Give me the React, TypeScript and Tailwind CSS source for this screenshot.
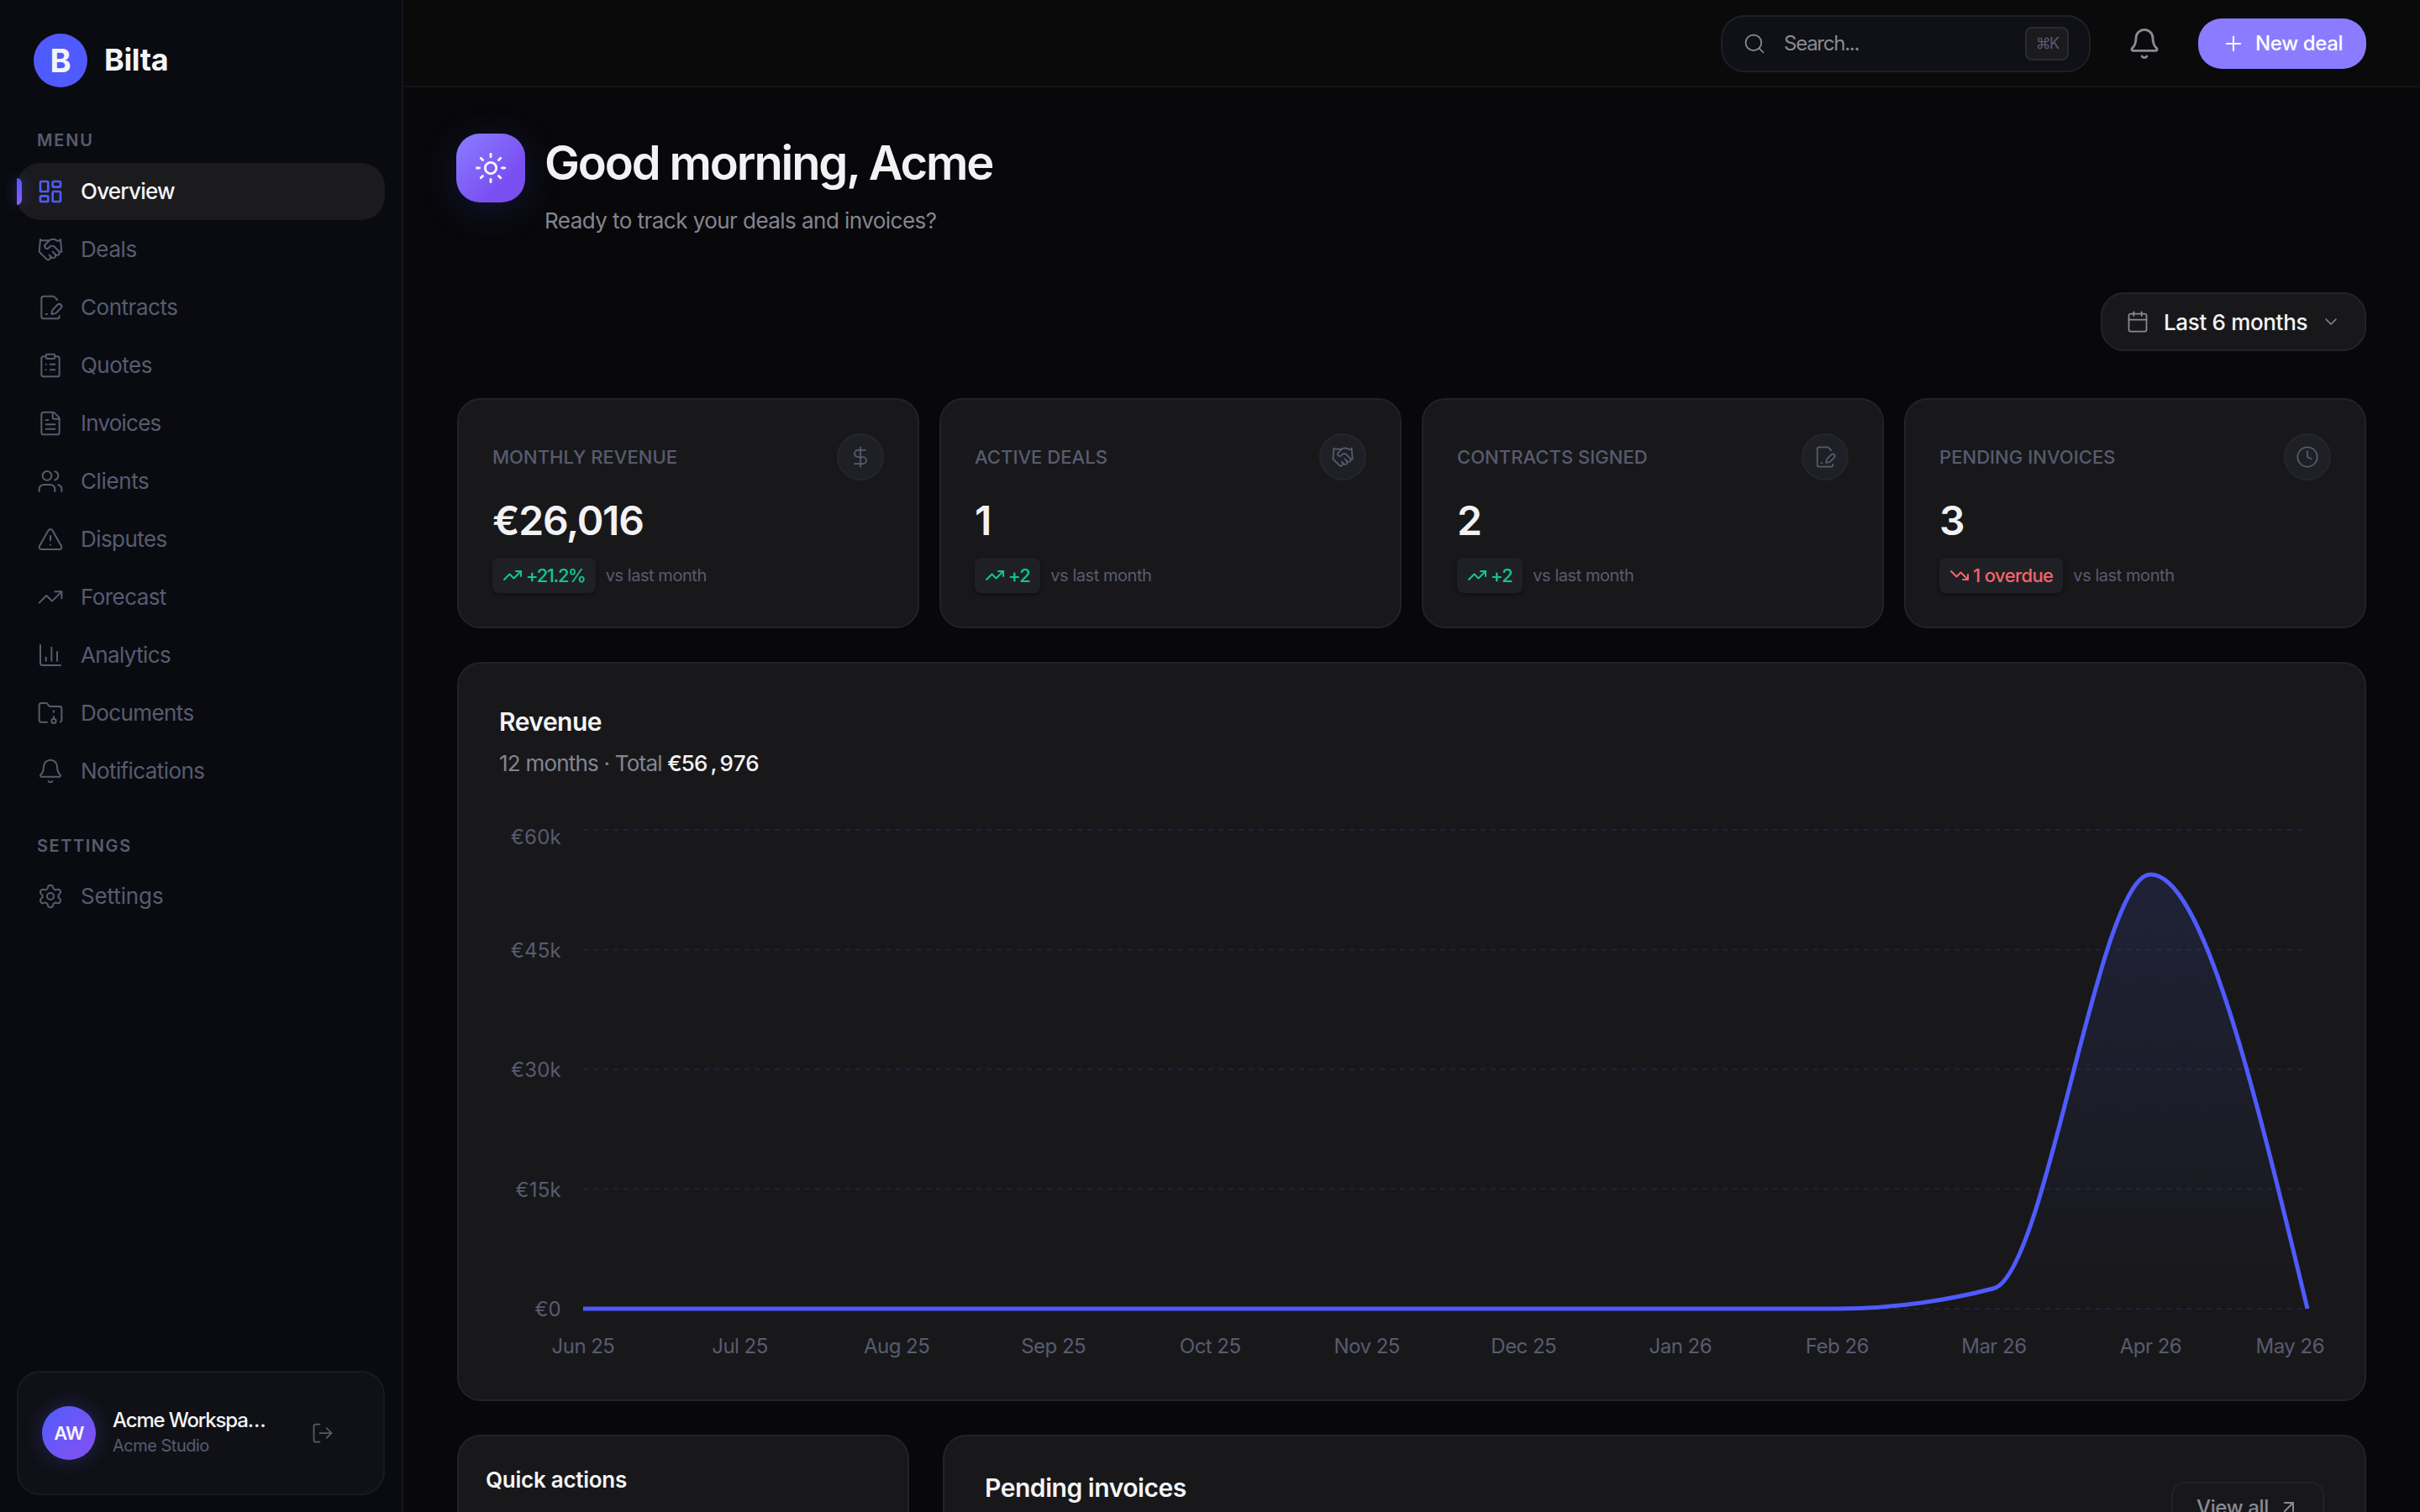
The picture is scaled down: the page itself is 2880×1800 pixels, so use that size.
import { clsx } from 'clsx';
import {
  ArrowUpRight,
  Bell,
  Calendar,
  ChartColumn,
  ChevronDown,
  ClipboardList,
  Clock,
  DollarSign,
  FileSignature,
  FileText,
  FolderArchive,
  Handshake,
  LayoutDashboard,
  LogOut,
  Plus,
  Search,
  Settings,
  Sun,
  TrendingDown,
  TrendingUp,
  TriangleAlert,
  Users,
  type LucideIcon,
} from 'lucide-react';

type NavEntry = { label: string; icon: LucideIcon; tracking: string; active?: boolean };

const MENU: NavEntry[] = [
  { label: 'Overview', icon: LayoutDashboard, tracking: 'tracking-[-0.03em]', active: true },
  { label: 'Deals', icon: Handshake, tracking: 'tracking-[-0.015em]' },
  { label: 'Contracts', icon: FileSignature, tracking: 'tracking-[-0.018em]' },
  { label: 'Quotes', icon: ClipboardList, tracking: 'tracking-[-0.02em]' },
  { label: 'Invoices', icon: FileText, tracking: 'tracking-[-0.03em]' },
  { label: 'Clients', icon: Users, tracking: 'tracking-[-0.015em]' },
  { label: 'Disputes', icon: TriangleAlert, tracking: 'tracking-[-0.022em]' },
  { label: 'Forecast', icon: TrendingUp, tracking: 'tracking-[-0.022em]' },
  { label: 'Analytics', icon: ChartColumn, tracking: 'tracking-[-0.024em]' },
  { label: 'Documents', icon: FolderArchive, tracking: 'tracking-[-0.022em]' },
  { label: 'Notifications', icon: Bell, tracking: 'tracking-[-0.023em]' },
];

const STATS = [
  { label: 'MONTHLY REVENUE', value: '€26,016', delta: '+21.2%', up: true, icon: DollarSign, tracking: 'tracking-[-0.062em]' },
  { label: 'ACTIVE DEALS', value: '1', delta: '+2', up: true, icon: Handshake, tracking: 'tracking-[-0.03em]' },
  { label: 'CONTRACTS SIGNED', value: '2', delta: '+2', up: true, icon: FileSignature, tracking: 'tracking-[-0.03em]' },
  { label: 'PENDING INVOICES', value: '3', delta: '1 overdue', up: false, icon: Clock, tracking: 'tracking-[-0.028em]' },
];

const REVENUE = [
  { month: 'Jun 25', total: 0 },
  { month: 'Jul 25', total: 0 },
  { month: 'Aug 25', total: 0 },
  { month: 'Sep 25', total: 0 },
  { month: 'Oct 25', total: 0 },
  { month: 'Nov 25', total: 0 },
  { month: 'Dec 25', total: 0 },
  { month: 'Jan 26', total: 0 },
  { month: 'Feb 26', total: 0 },
  { month: 'Mar 26', total: 2556 },
  { month: 'Apr 26', total: 54420 },
  { month: 'May 26', total: 0 },
];

const TICKS = [60, 45, 30, 15, 0];

function NavItem({ label, icon: Icon, tracking, active }: NavEntry) {
  return (
    <a
      className={clsx(
        'relative flex h-[68px] items-center gap-5 rounded-[28px] pl-6 text-[26px]',
        tracking,
        active ? 'bg-[#1b1b1e] font-medium text-[#f4f4f6]' : 'text-[#585b70]',
      )}
    >
      {active && (
        <span className="absolute left-0 top-[18px] h-8 w-1.5 rounded-r-full bg-linear-to-b from-[#4f5bff] to-[#8b5cf6] shadow-[0_0_16px_rgba(79,91,255,0.45)]" />
      )}
      <Icon size={32} strokeWidth={active ? 2 : 1.5} className={active ? 'text-[#4f5bff]' : ''} />
      <span className="pb-0.5">{label}</span>
    </a>
  );
}

function Sidebar() {
  return (
    <aside className="flex w-[480px] shrink-0 flex-col border-r-2 border-[#16171b] bg-[#0a0b10] pb-5 pl-5 pr-5">
      <div className="mt-10 flex items-center gap-5 pl-5">
        <div className="flex size-16 items-center justify-center rounded-full bg-[#4f5bff] text-[38px] font-bold text-[#f4f4f6]">B</div>
        <span className="pb-0.5 text-[36px] font-bold tracking-[-0.01em] text-[#f4f4f6]">Bilta</span>
      </div>
      <h2 className="mt-12 pl-6 text-[20px] font-semibold leading-[30px] tracking-[0.09em] text-[#585b70]">MENU</h2>
      <nav className="mt-3 flex flex-col gap-px">
        {MENU.map((item) => <NavItem key={item.label} {...item} />)}
      </nav>
      <h2 className="mt-10 pl-6 text-[20px] font-semibold leading-[30px] tracking-[0.078em] text-[#585b70]">SETTINGS</h2>
      <nav className="mt-[11px]">
        <NavItem label="Settings" icon={Settings} tracking="tracking-[-0.005em]" />
      </nav>

      <div className="mt-auto flex h-[148px] items-center rounded-[28px] border-2 border-[#1a1b1f] bg-[#101116] pl-7">
        <div className="flex size-16 items-center justify-center rounded-full bg-linear-to-br from-[#4f5bff] to-[#8450f0] text-[22px] font-semibold tracking-[-0.03em] text-[#f4f4f6] shadow-[0_0_24px_rgba(79,91,255,0.28)]">
          AW
        </div>
        <div className="ml-5 w-[190px]">
          <p className="-mt-0.5 text-[24px] font-medium leading-8 tracking-[-0.048em] whitespace-nowrap text-[#f4f4f6]">Acme Workspa…</p>
          <p className="text-[20px] leading-7 tracking-[-0.025em] text-[#585b70]">Acme Studio</p>
        </div>
        <LogOut size={28} strokeWidth={1.5} className="ml-[46px] text-[#585b70]" />
      </div>
    </aside>
  );
}

function Topbar() {
  return (
    <header className="flex h-[104px] shrink-0 items-center justify-end border-b-2 border-[#151518] bg-[#0a0a0b] pr-16 pt-0.5">
      <div className="flex h-[68px] w-[440px] items-center rounded-[28px] border-2 border-[#1f2026] bg-[#101116] pl-6 pr-6">
        <Search size={28} strokeWidth={1.5} className="text-[#8a8a94]" />
        <span className="ml-[21px] text-[24px] tracking-[-0.052em] text-[#8a8a94]">Search...</span>
        <kbd className="ml-auto flex h-10 w-[52px] items-center justify-center rounded-lg border-2 border-[#2a2b31] bg-[#1b1b1e] pb-0.5 font-['Inter',sans-serif] text-[18px] tracking-[-0.1em] text-[#585b70]">
          ⌘K
        </kbd>
      </div>
      <Bell size={40} strokeWidth={1.75} className="ml-11 text-[#8a8a94]" />
      <button className="ml-11 flex h-[60px] w-[200px] items-center rounded-[28px] bg-[#8b7cff] pl-7 text-[24px] font-medium text-white">
        <Plus size={28} strokeWidth={1.75} />
        <span className="ml-3 tracking-[-0.015em]">New deal</span>
      </button>
    </header>
  );
}

function StatCard({ label, value, delta, up, icon: Icon, tracking }: (typeof STATS)[number]) {
  const Trend = up ? TrendingUp : TrendingDown;
  return (
    <section className="h-[274px] rounded-[28px] border-2 border-[#222228] bg-[#18181a] p-10">
      <div className="flex items-center justify-between">
        <h3 className="text-[22px] font-medium tracking-[0.002em] text-[#585b70]">{label}</h3>
        <div className="flex size-14 items-center justify-center rounded-full border-2 border-[#25262d] bg-[#1f2026] text-[#585b70]">
          <Icon size={28} strokeWidth={1.5} />
        </div>
      </div>
      <p className="mt-4 text-[48px] font-semibold leading-[64px] tracking-[-0.026em] text-[#f2f2f5]">{value}</p>
      <div className="mt-3 flex items-center gap-3">
        <span
          className={clsx(
            'flex h-[42px] items-center gap-1 rounded-lg bg-[#1f2026] px-3 text-[22px] font-medium shadow-[0_2px_4px_rgba(8,8,14,0.5)]',
            tracking,
            up ? 'text-[#10c98c]' : 'text-[#f66467]',
          )}
        >
          <Trend size={24} strokeWidth={2} />
          {delta}
        </span>
        <span className="text-[20px] tracking-[-0.022em] text-[#585b70]">vs last month</span>
      </div>
    </section>
  );
}

const PLOT = { left: 100, right: 2152, top: 20, bottom: 590 };

// Cubic path through the points that never overshoots between two of them.
function monotonePath(pts: number[][]) {
  const n = pts.length;
  const slope = pts.slice(1).map((p, i) => (p[1] - pts[i][1]) / (p[0] - pts[i][0]));
  const tan: number[] = [];
  for (let i = 1; i < n - 1; i++) {
    const a = slope[i - 1];
    const b = slope[i];
    const m = Math.min(Math.abs(a), Math.abs(b), Math.abs(a + b) / 4);
    tan[i] = (Math.sign(a) + Math.sign(b)) * m;
  }
  tan[0] = (3 * slope[0] - tan[1]) / 2;
  tan[n - 1] = (3 * slope[n - 2] - tan[n - 2]) / 2;
  let d = `M${pts[0][0]},${pts[0][1]}`;
  for (let i = 1; i < n; i++) {
    const [x0, y0] = pts[i - 1];
    const [x1, y1] = pts[i];
    const dx = (x1 - x0) / 3;
    d += `C${x0 + dx},${y0 + dx * tan[i - 1]},${x1 - dx},${y1 - dx * tan[i]},${x1},${y1}`;
  }
  return d;
}

function RevenueChart() {
  const step = (PLOT.right - PLOT.left) / (REVENUE.length - 1);
  const height = PLOT.bottom - PLOT.top;
  const pts = REVENUE.map((r, i) => [PLOT.left + i * step, PLOT.bottom - (r.total / 60000) * height]);
  const line = monotonePath(pts);

  return (
    <svg width={2172} height={650} viewBox="0 0 2172 650" className="block">
      <defs>
        <linearGradient id="revenue-fill" x1="0" y1="0" x2="0" y2="1">
          <stop offset="0" stopColor="#4f66ff" stopOpacity={0.13} />
          <stop offset="1" stopColor="#4f66ff" stopOpacity={0} />
        </linearGradient>
      </defs>
      {TICKS.map((t, i) => {
        const y = PLOT.bottom - (t / 60) * height;
        return (
          <g key={t}>
            <line x1={PLOT.left} x2={PLOT.right} y1={y} y2={y} stroke="#20213a" strokeWidth={2} strokeDasharray="6 6" />
            <text x={74} y={i === 0 ? y + 17 : y + 9} textAnchor="end" className="fill-[#585b70] text-[24px] tracking-[0.01em]">
              {t ? `€${t}k` : '€0'}
            </text>
          </g>
        );
      })}
      <path d={`${line}L${PLOT.right},${PLOT.bottom}L${PLOT.left},${PLOT.bottom}Z`} fill="url(#revenue-fill)" />
      <path d={line} fill="none" stroke="#4f5bff" strokeWidth={5} />
      {REVENUE.map((r, i) => {
        const last = i === REVENUE.length - 1;
        return (
          <text
            key={r.month}
            x={last ? 2172 : pts[i][0]}
            y={643}
            textAnchor={last ? 'end' : 'middle'}
            className="fill-[#585b70] text-[24px] tracking-[-0.022em]"
          >
            {r.month}
          </text>
        );
      })}
    </svg>
  );
}

export default function App() {
  return (
    <div className="flex h-[1800px] w-[2880px] overflow-hidden bg-[#08080a] font-['Inter',sans-serif] antialiased">
      <Sidebar />
      <div className="flex min-w-0 flex-1 flex-col">
        <Topbar />
        <main className="flex flex-1 flex-col px-16">
          <div className="mt-[54px] flex">
            <div className="mt-px -ml-px flex size-[82px] items-center justify-center rounded-[28px] bg-linear-to-br from-[#8b7cff] to-[#7a4ff2] to-70% text-[#f4f4f6] shadow-[0_8px_48px_rgba(79,91,255,0.18)]">
              <Sun size={40} strokeWidth={1.75} />
            </div>
            <div className="ml-[23px]">
              <h1 className="text-[56px] font-semibold leading-[72px] tracking-[-0.038em] text-[#f2f2f5]">Good morning, Acme</h1>
              <p className="mt-[13px] text-[26px] leading-10 tracking-[-0.021em] text-[#85858f]">Ready to track your deals and invoices?</p>
            </div>
          </div>

          <button className="mt-[65px] flex h-[70px] w-[316px] items-center self-end rounded-[28px] border-2 border-[#232329] bg-[#18181b] pl-7 text-[26px] font-medium text-[#f4f4f6]">
            <Calendar size={28} strokeWidth={1.5} className="text-[#8a8a94]" />
            <span className="ml-[17px] w-[171px] text-left tracking-[-0.013em] whitespace-nowrap">Last 6 months</span>
            <ChevronDown size={24} strokeWidth={1.5} className="ml-4 text-[#8a8a94]" />
          </button>

          <div className="mt-14 grid grid-cols-4 gap-6">
            {STATS.map((s) => <StatCard key={s.label} {...s} />)}
          </div>

          <section className="mt-10 flex h-[880px] shrink-0 flex-col rounded-[28px] border-2 border-[#222228] bg-[#18181a] p-12">
            <h2 className="mt-px text-[30px] font-semibold leading-10 tracking-[-0.017em] text-[#f4f4f6]">Revenue</h2>
            <p className="mt-2.5 text-[26px] leading-10 tracking-[-0.03em] text-[#85858f]">
              12 months · Total{' '}
              <span className="font-medium tracking-[-0.055em] tabular-nums text-[#f4f4f6]">
                €56<span className="inline-block w-[15px] text-center">,</span>976
              </span>
            </p>
            <div className="mt-auto">
              <RevenueChart />
            </div>
          </section>

          <div className="mt-10 flex h-[400px] shrink-0 gap-10">
            <section className="w-[538px] rounded-[28px] border-2 border-[#222228] bg-[#18181a] p-8">
              <h2 className="mt-0.5 text-[26px] font-semibold leading-9 tracking-[-0.01em] text-[#f4f4f6]">Quick actions</h2>
            </section>
            <section className="flex flex-1 items-start justify-between rounded-[28px] border-2 border-[#222228] bg-[#18181a] px-12">
              <h2 className="mt-[41px] text-[30px] font-semibold leading-10 tracking-[-0.015em] text-[#f4f4f6]">Pending invoices</h2>
              <button className="mt-[54px] flex h-[60px] w-[182px] items-center rounded-2xl border-2 border-[#222228] pl-7 text-[24px] font-medium text-[#8a8a94]">
                <span className="w-[90px] pt-0.5 text-left tracking-[-0.015em]">View all</span>
                <ArrowUpRight size={24} strokeWidth={2} className="ml-2" />
              </button>
            </section>
          </div>
        </main>
      </div>
    </div>
  );
}
